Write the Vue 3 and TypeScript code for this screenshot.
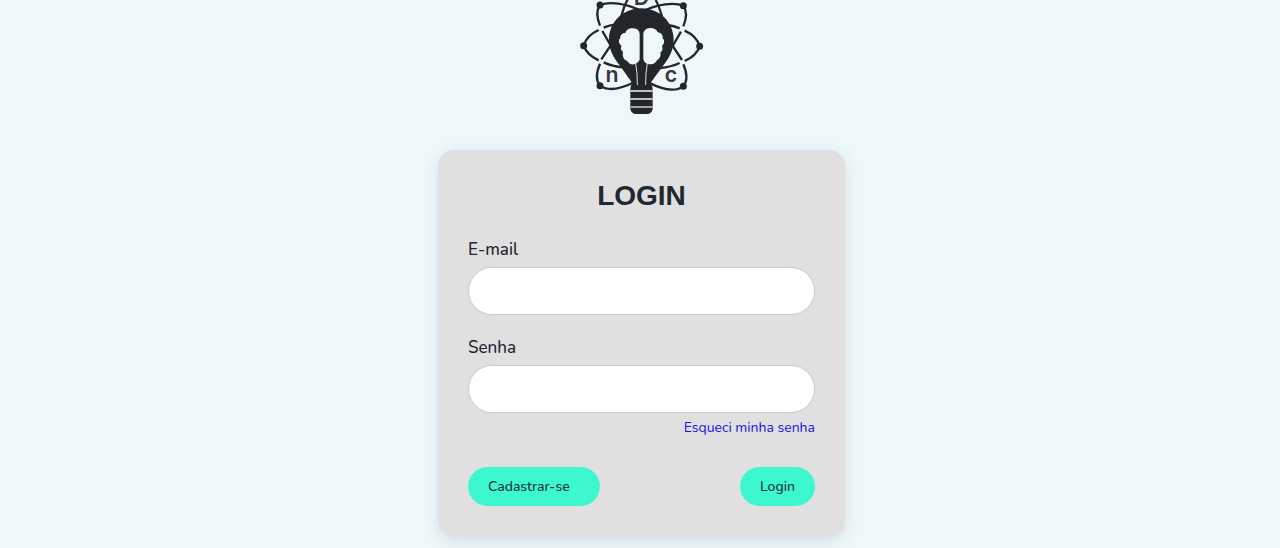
<script setup lang="ts">
import { ref } from 'vue'

const email = ref('')
const password = ref('')
</script>

<template>
  <main class="page">
    <svg class="logo" viewBox="0 0 420 360" role="img" aria-label="Logo">
      <defs>
        <g id="orbit-half">
          <path d="M84 15C112 4 160 9 212 35" />
          <path d="M84 15C70 35 77 60 84 77" />
          <path d="M91 93L116 136L88 178" />
          <path d="M95 83Q112 75 132 73" />
          <path d="M35 137C42 112 62 98 80 90" />
          <path d="M35 137C43 160 62 173 80 181" />
          <path d="M95 187C112 195 130 200 154 202" />
          <path d="M84 191C75 212 70 240 84 257C108 275 148 266 188 246" />
          <path d="M167 -2Q156 18 148 48" />
          <circle cx="84" cy="15" r="7" fill="#23272c" />
          <circle cx="35" cy="137" r="7" fill="#23272c" />
          <circle cx="84" cy="257" r="7" fill="#23272c" />
        </g>
      </defs>
      <use href="#orbit-half" class="orbits" />
      <use href="#orbit-half" class="orbits" transform="translate(418 2) scale(-1 1)" />
      <path
        class="solid"
        d="M208 25C154 25 111 66 111 119C111 151 126 174 145 199L181 250Q175 257 175 268V326Q177 341 192 342H225Q240 341 242 326V268Q242 257 235 250L272 199C291 174 305 151 305 119C305 66 262 25 208 25Z"
      />
      <path
        class="cut"
        d="M203 101C202 91 195 86 184 85C171 84 162 91 161 98C150 99 144 106 145 114C139 119 139 128 145 134L149 138C144 143 148 153 153 155C151 166 153 176 161 181C168 183 169 191 178 193C192 195 202 185 203 177Z"
      />
      <path
        class="cut"
        d="M214 101C215 91 223 85 234 84C247 84 255 89 257 97C268 98 273 106 272 115C278 120 278 130 272 135L270 140C274 147 270 154 265 157C268 168 262 177 255 181C251 188 246 193 237 193C225 194 215 186 214 177Z"
      />
      <path class="wire" d="M191 190Q197 222 196 255M226 190Q220 222 221 255" />
      <path class="band" d="M175 273H242M175 297H242" />
      <path class="band dim" d="M175 321H242" />
      <text class="letter" x="208" y="14">D</text>
      <text class="letter" x="120" y="246">n</text>
      <text class="letter" x="297" y="246">c</text>
    </svg>

    <form class="card" @submit.prevent>
      <h1>LOGIN</h1>
      <label for="email">E-mail</label>
      <input id="email" v-model="email" type="email" />
      <label for="password">Senha</label>
      <input id="password" v-model="password" type="password" />
      <a href="#recuperar">Esqueci minha senha</a>
      <div class="actions">
        <button class="register" type="button">Cadastrar-se</button>
        <button type="submit">Login</button>
      </div>
    </form>
  </main>
</template>

<style>
body {
  background: #eef7f9;
}
</style>

<style scoped>
.page {
  display: flex;
  flex-direction: column;
  align-items: center;
  gap: 30px;
  padding: 0 0 11px 3px;
  color: #212832;
  font-family: Nunito, Lato, sans-serif;
}
.logo {
  width: 140px;
  height: 120px;
}
.orbits {
  fill: none;
  stroke: #23272c;
  stroke-width: 7;
}
.solid {
  fill: #23272c;
}
.cut {
  fill: #eef7f9;
}
.wire {
  fill: none;
  stroke: #d9e1e4;
  stroke-width: 3;
}
.band {
  stroke: #eef7f9;
  stroke-width: 4;
}
.dim {
  stroke: #9ea4a8;
  stroke-width: 6;
}
.letter {
  fill: #38343f;
  font: 600 64px Inter, sans-serif;
  text-anchor: middle;
}
.card {
  box-sizing: border-box;
  display: flex;
  flex-direction: column;
  width: 100%;
  max-width: 407px;
  padding: 30px 30px 31px;
  border-radius: 16px;
  background: #e0e0e0;
  box-shadow: 0 4px 16px rgba(0, 0, 0, 0.1);
}
h1 {
  margin: 0 0 28px;
  font: 700 28px/32px "Liberation Sans", Arial, sans-serif;
  text-align: center;
}
label {
  margin-bottom: 7px;
  font-size: 17px;
  line-height: 20px;
  font-weight: 500;
}
input {
  box-sizing: border-box;
  width: 100%;
  height: 48px;
  margin: 0 0 23px;
  padding: 0 20px;
  border: 1px solid #cccccc;
  border-radius: 24px;
  background: #ffffff;
  font: inherit;
}
#password {
  margin-bottom: 5px;
}
a {
  align-self: flex-end;
  color: #1a14dc;
  font-size: 14px;
  line-height: 20px;
  text-decoration: none;
}
.actions {
  display: flex;
  justify-content: space-between;
  margin-top: 29px;
}
button {
  height: 39px;
  padding: 0 20px;
  border: 0;
  border-radius: 20px;
  background: #3df8cf;
  color: #17353c;
  font: 500 14px/20px Nunito, Lato, sans-serif;
}
.register {
  padding-right: 30px;
}
</style>
